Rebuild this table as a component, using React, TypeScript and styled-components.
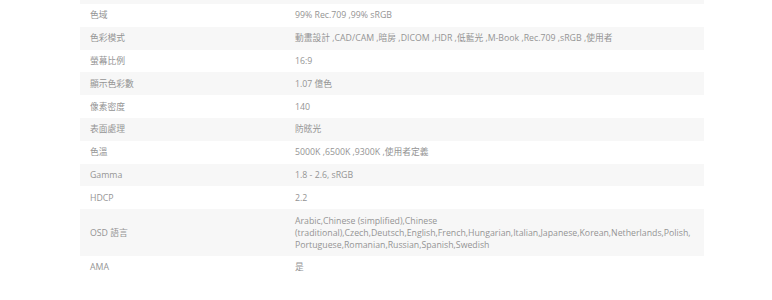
import styled, { createGlobalStyle } from 'styled-components';

const specs: { label: string; value: string }[] = [
  { label: '', value: '' },
  { label: '色域', value: '99% Rec.709 ,99% sRGB' },
  { label: '色彩模式', value: '動畫設計 ,CAD/CAM ,暗房 ,DICOM ,HDR ,低藍光 ,M-Book ,Rec.709 ,sRGB ,使用者' },
  { label: '螢幕比例', value: '16:9' },
  { label: '顯示色彩數', value: '1.07 億色' },
  { label: '像素密度', value: '140' },
  { label: '表面處理', value: '防眩光' },
  { label: '色溫', value: '5000K ,6500K ,9300K ,使用者定義' },
  { label: 'Gamma', value: '1.8 - 2.6, sRGB' },
  { label: 'HDCP', value: '2.2' },
  {
    label: 'OSD 語言',
    value:
      'Arabic,Chinese (simplified),Chinese (traditional),Czech,Deutsch,English,French,Hungarian,Italian,Japanese,Korean,Netherlands,Polish, Portuguese,Romanian,Russian,Spanish,Swedish',
  },
  { label: 'AMA', value: '是' },
];

const App = () => {
  return (
    <>
      <GlobalStyle />
      <Page>
        <SpecTable>
          <tbody>
            {specs.map((s, i) => (
              <SpecRow key={i} $striped={i % 2 === 0}>
                <Label>{s.label}</Label>
                <Value>{s.value}</Value>
              </SpecRow>
            ))}
          </tbody>
        </SpecTable>
      </Page>
    </>
  );
};

export default App;

const GlobalStyle = createGlobalStyle`
  html, body {
    margin: 0;
    padding: 0;
    background: #fff;
  }
  body {
    font-family: "Open Sans", "Noto Sans CJK TC", sans-serif;
    font-size: 8.75px;
    color: #949494;
  }
`;

const Page = styled.div`
  width: 772px;
  height: 300px;
  overflow: hidden;
  padding: 0 68px 0 80px;
  box-sizing: border-box;
`;

const SpecTable = styled.table`
  width: 624px;
  border-collapse: collapse;
  table-layout: fixed;
  margin-top: -18.8px;
`;

const SpecRow = styled.tr<{ $striped: boolean }>`
  background: ${(p) => (p.$striped ? '#f7f7f7' : '#fff')};
`;

const Label = styled.td`
  width: 205px;
  padding: 5.4px 10px;
  line-height: 12px;
  vertical-align: middle;
  box-sizing: border-box;
  height: 22.8px;
`;

const Value = styled.td`
  padding: 5.4px 4px 5.4px 10px;
  line-height: 12px;
  vertical-align: middle;
`;
